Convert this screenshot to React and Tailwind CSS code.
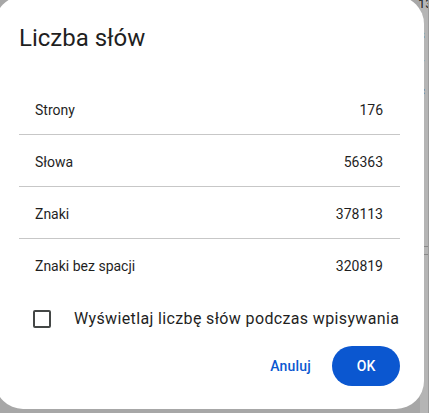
export default function App() {
  const rows = [
    ['Strony', '176'],
    ['Słowa', '56363'],
    ['Znaki', '378113'],
    ['Znaki bez spacji', '320819'],
  ];

  return (
    <div className="relative w-[429px] h-[413px] overflow-hidden bg-[#a7a7a7] font-['Roboto',sans-serif] flex justify-end">
      {/* document behind the overlay */}
      <div className="w-[9px] h-full flex">
        <div className="w-[8px] h-full bg-[#b5b5b5] text-[#1f1f1f] text-[13px] leading-none flex flex-col">
          <div className="-mt-[3px] -ml-[2px]">13</div>
          <div className="mt-[18px] -ml-[2px]">s</div>
          <div className="mt-[15px] -ml-[2px]">y</div>
          <div className="mt-[15px] -ml-[2px]">c</div>
          <div className="mt-[149px] h-px bg-[#8a8a8a]" />
          <div className="mt-[7px] h-px bg-[#8a8a8a]" />
        </div>
        <div className="w-px h-full bg-[#9c9c9c]" />
      </div>

      {/* dialog */}
      <div className="absolute left-[-5px] top-[-4px] w-[429px] h-[413px] bg-white rounded-[28px] px-[24px] pt-[26px]">
        <h1 className="text-[24px] leading-[32px] text-[#1f1f1f] font-normal">Liczba słów</h1>

        <div className="mt-[29px]">
          {rows.map(([label, value], i) => (
            <div
              key={label}
              className={`flex justify-between pl-[16px] pr-[17px] pt-[17px] pb-[14px] text-[14px] leading-[20px] text-[#1f1f1f] ${i < rows.length - 1 ? 'border-b border-[#c7c7c7]' : ''}`}
            >
              <span>{label}</span>
              <span>{value}</span>
            </div>
          ))}
        </div>

        <label className="flex items-center mt-[17px] pl-[14px]">
          <span className="w-[18px] h-[18px] border-2 border-[#444746] rounded-[2px]" />
          <span className="ml-[23px] text-[16px] leading-[24px] tracking-[0.36px] text-[#1f1f1f]">
            Wyświetlaj liczbę słów podczas wpisywania
          </span>
        </label>

        <div className="flex justify-end items-center mt-[15px]">
          <button className="text-[14px] font-medium text-[#0b57d0] px-[12px] h-[40px] tracking-[0.2px]">Anuluj</button>
          <button className="ml-[9px] w-[68px] h-[40px] rounded-full bg-[#0b57d0] text-white text-[14px] font-medium">
            OK
          </button>
        </div>
      </div>
    </div>
  );
}
